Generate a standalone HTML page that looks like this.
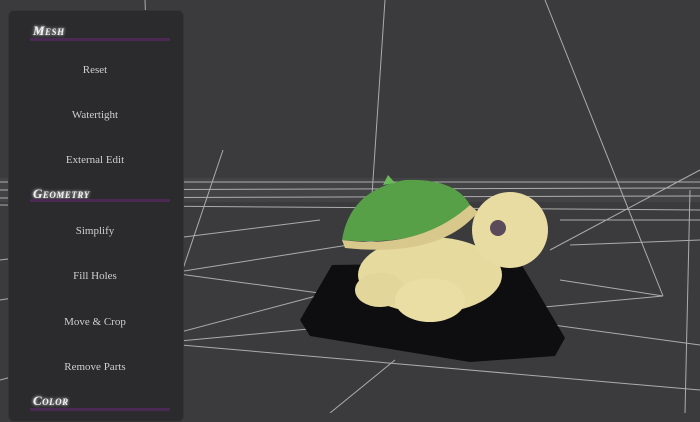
<!DOCTYPE html>
<html><head><style>
html,body{margin:0;padding:0;width:700px;height:413px;overflow:hidden;background:#3b3b3d;}
svg{position:absolute;left:0;top:0}
.p{position:absolute;left:8px;top:10px;width:174px;height:410px;background:#2b2b2d;border-radius:6px;border:1px solid #353535;}
.h{position:absolute;left:33px;font:italic bold 13px "Liberation Serif",serif;color:#f2f2f2;font-variant:small-caps;letter-spacing:0.5px;text-shadow:0 0 3px #fff}
.bar{position:absolute;left:30px;width:140px;height:3px;background:#4a2a55}
.i{position:absolute;width:190px;left:0;text-align:center;font:11px "Liberation Serif",serif;color:#cfcfcf}
</style></head><body>
<svg width="700" height="413">
<rect x="0" y="178" width="700" height="24" fill="#4a4a4c" opacity="0.6"/>
<g stroke="#c8c8c8" stroke-width="1" fill="none" opacity="0.8">
<line x1="145" y1="0" x2="158" y2="343"/>
<line x1="385" y1="0" x2="372" y2="195"/>
<line x1="545" y1="0" x2="663" y2="296"/>
<line x1="223" y1="150" x2="158" y2="343"/>
<line x1="158" y1="343" x2="663" y2="296"/>
<line x1="158" y1="343" x2="700" y2="390"/>
<line x1="0" y1="300" x2="380" y2="240"/>
<line x1="0" y1="260" x2="320" y2="220"/>
<line x1="150" y1="270" x2="700" y2="345"/>
<line x1="0" y1="380" x2="320" y2="295"/>
<line x1="560" y1="280" x2="663" y2="296"/>
<line x1="560" y1="220" x2="700" y2="220"/>
<line x1="570" y1="245" x2="700" y2="240"/>
<line x1="550" y1="250" x2="700" y2="170"/>
<line x1="690" y1="190" x2="685" y2="413"/>
<line x1="330" y1="413" x2="395" y2="360"/>
<line x1="0" y1="182" x2="700" y2="182"/>
<line x1="0" y1="190" x2="700" y2="188"/>
<line x1="0" y1="198" x2="700" y2="196"/>
<line x1="0" y1="205" x2="700" y2="210"/>
</g>
<path d="M300 320 L332 265 L520 262 L565 338 L555 356 L470 362 L310 336 Z" fill="#0e0e10"/>
<ellipse cx="430" cy="275" rx="72" ry="38" fill="#e6da9e"/>
<ellipse cx="380" cy="290" rx="25" ry="17" fill="#e2d69a"/>
<ellipse cx="430" cy="300" rx="35" ry="22" fill="#eadea4"/>
<circle cx="510" cy="230" r="38" fill="#e8dca2"/>
<circle cx="498" cy="228" r="8" fill="#5a4a5a"/>
<path d="M342 240 Q350 190 405 180 Q455 178 470 205 Q430 248 342 240 Z" fill="#58a048"/>
<path d="M342 240 Q420 250 470 205 L478 212 Q440 258 345 248 Z" fill="#d8c88c"/>
<path d="M383 185 L388 175 L395 183 Z" fill="#6aba5a"/>
</svg>
<div class="p"></div>
<div class="h" style="top:23px">Mesh</div><div class="bar" style="top:38px"></div>
<div class="i" style="top:64px">Reset</div>
<div class="i" style="top:109px">Watertight</div>
<div class="i" style="top:154px">External Edit</div>
<div class="h" style="top:186px">Geometry</div><div class="bar" style="top:199px"></div>
<div class="i" style="top:225px">Simplify</div>
<div class="i" style="top:270px">Fill Holes</div>
<div class="i" style="top:316px">Move &amp; Crop</div>
<div class="i" style="top:361px">Remove Parts</div>
<div class="h" style="top:393px">Color</div><div class="bar" style="top:408px"></div>
</body></html>
